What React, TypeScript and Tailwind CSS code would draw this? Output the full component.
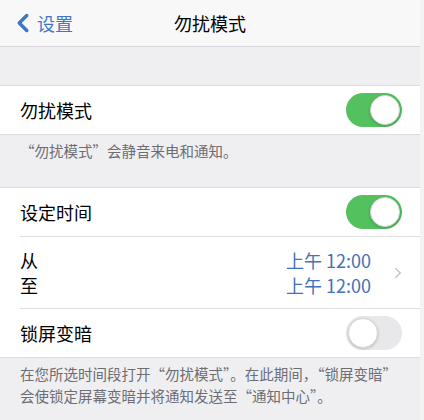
import { ChevronLeft, ChevronRight } from "lucide-react";

function Toggle({ on }: { on: boolean }) {
  return (
    <div
      className={
        "flex h-[34px] w-[56px] items-center rounded-full p-[2px] " +
        (on ? "justify-end bg-[#52c15e]" : "justify-start bg-[#e8e8ea]")
      }
    >
      <div className="h-[30px] w-[30px] rounded-full border border-[#d6d6d6] bg-white shadow-[0_1px_3px_rgba(0,0,0,0.2)]" />
    </div>
  );
}

function Row({ label, on }: { label: string; on: boolean }) {
  return (
    <div className="flex h-[48px] items-center justify-between pl-5 pr-[18px]">
      <span className="text-[18px] text-black">{label}</span>
      <Toggle on={on} />
    </div>
  );
}

export default function App() {
  return (
    <div
      className="flex h-[420px] w-[424px] bg-[#f3f3f3]"
      style={{ fontFamily: '"Noto Sans CJK SC", "Noto Sans", sans-serif' }}
    >
      <div className="flex w-[420px] flex-col bg-[#efeff2]">
        {/* nav bar */}
        <div className="relative flex h-[47px] items-center justify-center border-b border-[#d8d8dc] bg-[#f8f8f9]">
          <div className="absolute left-[8px] top-0 flex h-full items-center text-[#3f76c6]">
            <ChevronLeft size={30} strokeWidth={2.8} />
            <span className="-ml-[1px] text-[18px]">设置</span>
          </div>
          <span className="text-[18px] font-normal text-black">勿扰模式</span>
        </div>

        <div className="h-[38px]" />

        <div className="border-y border-[#dcdce0] bg-white">
          <Row label="勿扰模式" on={true} />
        </div>
        <div className="h-[52px] px-5 pt-[5px] text-[14.5px] leading-[22px] text-[#6d6d72]">
          “勿扰模式”会静音来电和通知。
        </div>

        <div className="border-y border-[#dcdce0] bg-white">
          <Row label="设定时间" on={true} />
          <div className="ml-5 border-t border-[#e0e0e4]" />
          <div className="flex h-[71px] items-center justify-between pl-5 pr-[13px]">
            <div className="flex flex-col text-[18px] leading-[25px] text-black">
              <span>从</span>
              <span>至</span>
            </div>
            <div className="flex items-center gap-[18px]">
              <div className="flex flex-col items-end text-[18px] leading-[25px] text-[#4272ba]">
                <span>上午 12:00</span>
                <span>上午 12:00</span>
              </div>
              <ChevronRight size={18} strokeWidth={2} className="text-[#c4c4c7]" />
            </div>
          </div>
          <div className="ml-5 border-t border-[#e0e0e4]" />
          <Row label="锁屏变暗" on={false} />
        </div>
        <div className="px-5 pt-[5px] text-[14.5px] leading-[22px] text-[#6d6d72]">
          在您所选时间段打开“勿扰模式”。在此期间，“锁屏变暗”
          <br />
          会使锁定屏幕变暗并将通知发送至“通知中心”。
        </div>
      </div>
    </div>
  );
}
